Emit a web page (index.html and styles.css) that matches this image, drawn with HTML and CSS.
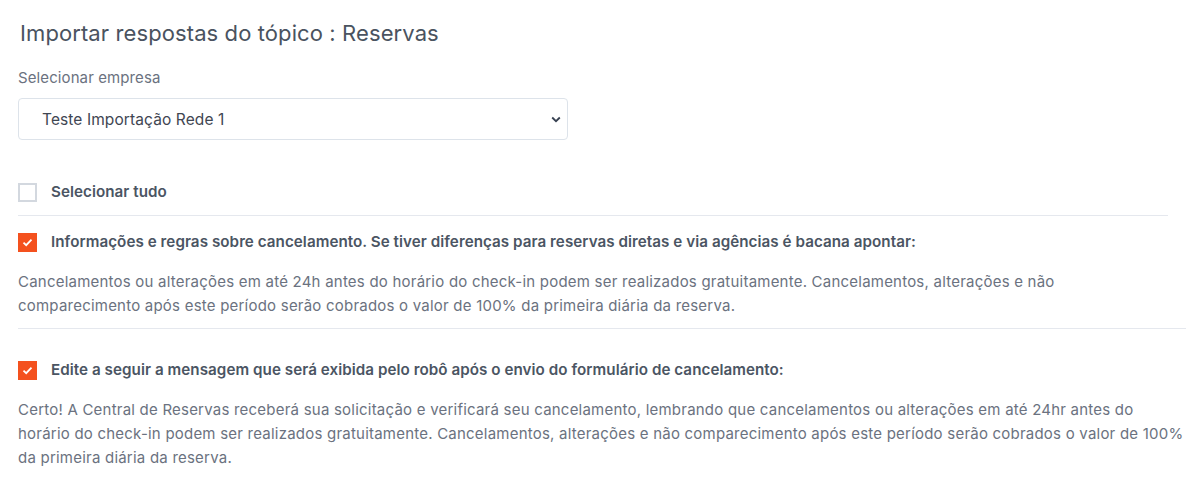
FILE: index.html
```html
<!DOCTYPE html>
<html lang="pt-BR">
  <head>
    <meta charset="UTF-8" />
    <meta name="viewport" content="width=device-width, initial-scale=1.0" />
    <title>Importar respostas</title>
    <link rel="stylesheet" href="styles.css">
  </head>
  <body>
    <h2 class="title">Importar respostas do tópico : Reservas</h2>

    <label class="field-label" for="empresa">Selecionar empresa</label>
    <div class="select-box">
      <span id="empresa">Teste Importação Rede 1</span>
      <svg class="chevron" width="10" height="7" viewBox="0 0 10 7"><path d="M1.2 1.5 5 5.2 8.8 1.5" fill="none" stroke="#374151" stroke-width="1.8"/></svg>
    </div>

    <div class="check-row all">
      <span class="box"></span>
      <span class="check-label">Selecionar tudo</span>
    </div>

    <div class="item first">
      <div class="check-row">
        <span class="box checked"><svg width="11" height="9" viewBox="0 0 11 9"><path d="M1.5 4.6 4.2 7.2 9.5 1.6" fill="none" stroke="#fff" stroke-width="1.8"/></svg></span>
        <span class="check-label">Informações e regras sobre cancelamento. Se tiver diferenças para reservas diretas e via agências é bacana apontar:</span>
      </div>
      <p class="answer">Cancelamentos ou alterações em até 24h antes do horário do check-in podem ser realizados gratuitamente. Cancelamentos, alterações e não<br>comparecimento após este período serão cobrados o valor de 100% da primeira diária da reserva.</p>
    </div>

    <div class="item">
      <div class="check-row">
        <span class="box checked"><svg width="11" height="9" viewBox="0 0 11 9"><path d="M1.5 4.6 4.2 7.2 9.5 1.6" fill="none" stroke="#fff" stroke-width="1.8"/></svg></span>
        <span class="check-label">Edite a seguir a mensagem que será exibida pelo robô após o envio do formulário de cancelamento:</span>
      </div>
      <p class="answer">Certo! A Central de Reservas receberá sua solicitação e verificará seu cancelamento, lembrando que cancelamentos ou alterações em até 24hr antes do horário do check-in podem ser realizados gratuitamente. Cancelamentos, alterações e não comparecimento após este período serão cobrados o valor de 100% da primeira diária da reserva.</p>
    </div>
  </body>
</html>
```

FILE: styles.css
```css
body {
  margin: 0;
  padding: 20px 11px 0 18px;
  font-family: Inter, "Noto Sans", sans-serif;
  background: #fff;
  color: #4b5563;
}
.title {
  margin: 0 0 0 2px;
  font-size: 22px;
  font-weight: 400;
  line-height: 26px;
  letter-spacing: 0.1px;
  color: #4a5360;
}
.field-label {
  display: block;
  margin-top: 22px;
  font-size: 15px;
  line-height: 20px;
  letter-spacing: 0.1px;
  color: #6b7280;
}
.select-box {
  display: flex;
  align-items: center;
  justify-content: space-between;
  box-sizing: border-box;
  width: 550px;
  height: 42px;
  margin-top: 10px;
  padding: 0 6px 0 23px;
  border: 1px solid #dde3ea;
  border-radius: 4px;
  font-size: 15.5px;
  letter-spacing: 0.1px;
  color: #3f4652;
}
.check-row {
  display: flex;
  align-items: center;
  gap: 14px;
  height: 20px;
}
.check-row.all {
  width: 1150px;
  margin-top: 42px;
  padding-bottom: 13px;
  border-bottom: 1px solid #e5e8ee;
}
.box {
  display: flex;
  align-items: center;
  justify-content: center;
  box-sizing: border-box;
  width: 19px;
  height: 19px;
  flex: none;
  border: 2px solid #d3d8df;
  background: #fff;
}
.box.checked {
  border: none;
  background: #f4511e;
}
.check-label {
  font-size: 15.2px;
  font-weight: 600;
  line-height: 20px;
  letter-spacing: 0.05px;
  color: #4b5563;
}
.item {
  padding-top: 16px;
}
.item.first {
  width: 1168px;
  border-bottom: 1px solid #e5e8ee;
  padding-bottom: 10px;
}
.item:last-child {
  padding-top: 31px;
}
.answer {
  margin: 18px 0 0;
  font-size: 15px;
  line-height: 24px;
  letter-spacing: 0.22px;
  color: #6b7280;
}
```
